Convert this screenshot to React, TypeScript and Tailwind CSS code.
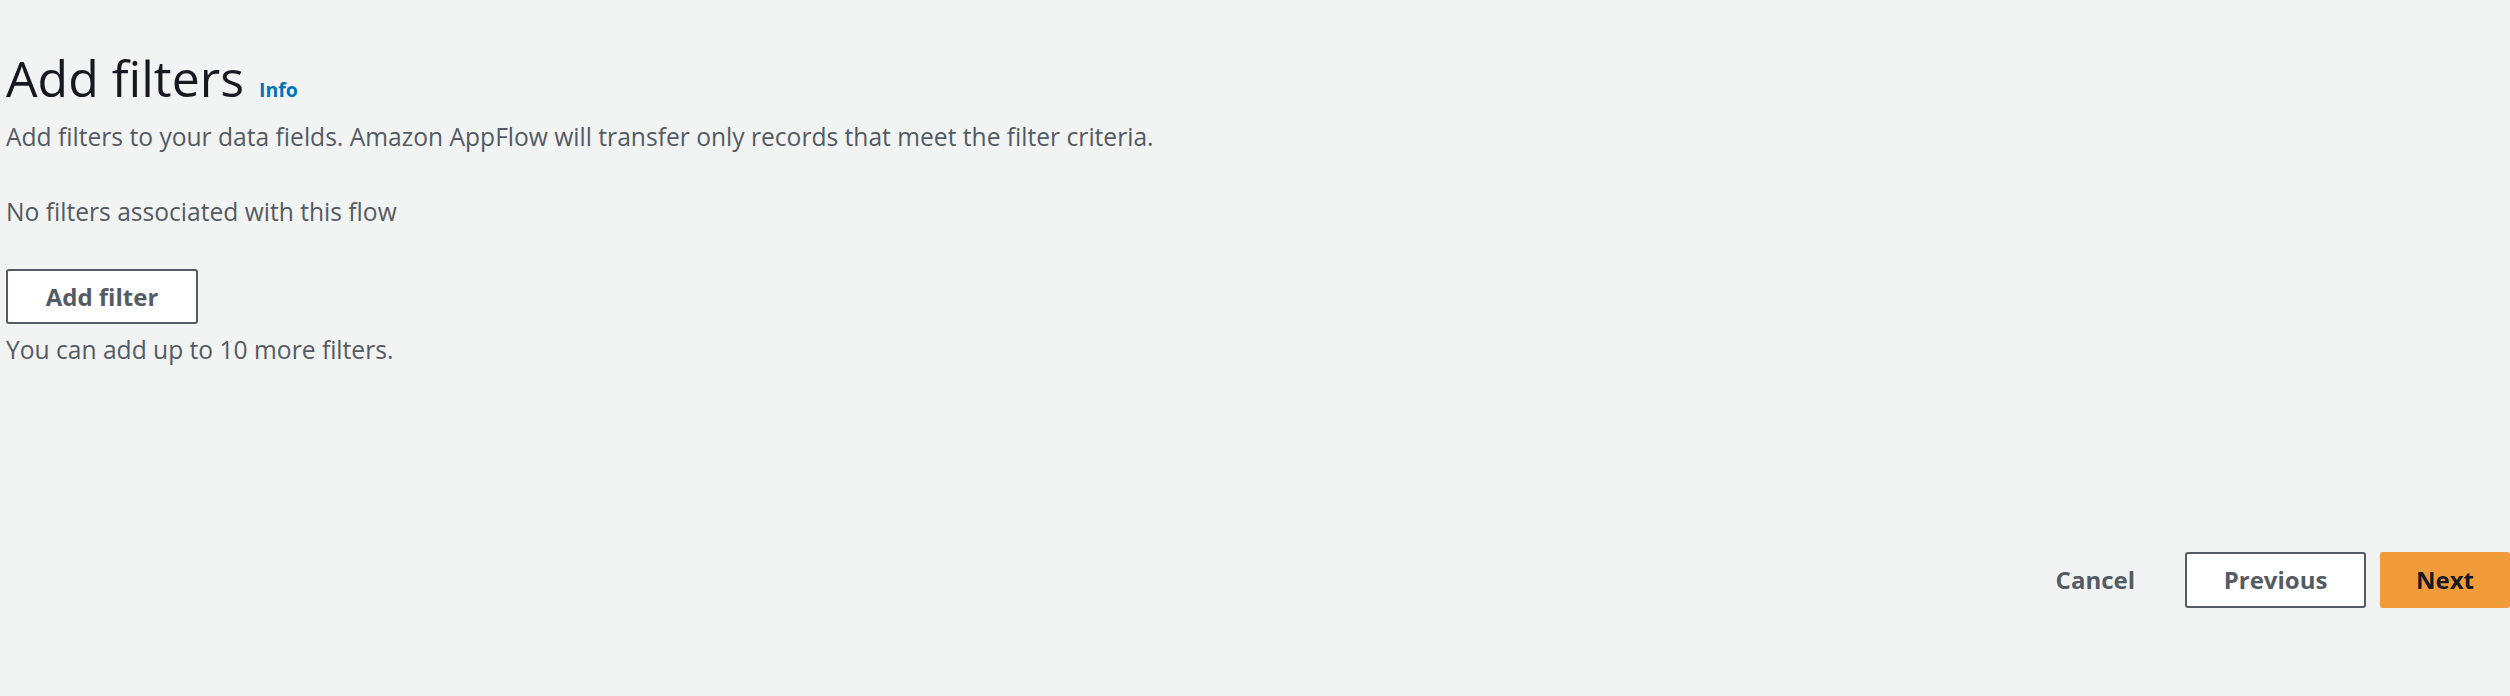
import React from 'react';

const font = { fontFamily: '"Open Sans", "Noto Sans", sans-serif' };

export default function App() {
  return (
    <div className="w-[2510px] h-[696px] bg-[#f2f3f3] text-[#545b64] flex flex-col" style={font}>
      {/* Header */}
      <div className="pl-[6px] pt-[48px]">
        <div className="flex items-baseline gap-[15px]">
          <h1 className="text-[50px] leading-[60px] font-normal text-[#16191f]">Add filters</h1>
          <a className="text-[19.5px] font-bold text-[#0073bb] cursor-pointer">Info</a>
        </div>
        <p className="text-[24.6px] leading-[36px] mt-[11px]">
          Add filters to your data fields. Amazon AppFlow will transfer only records that meet the filter criteria.
        </p>
      </div>

      {/* Filters */}
      <div className="pl-[6px] mt-[39px] flex flex-col items-start">
        <p className="text-[24.6px] leading-[36px]">No filters associated with this flow</p>
        <button className="mt-[39px] h-[55px] w-[192px] border-2 border-[#545b64] rounded-[3px] bg-white text-[24px] font-bold text-[#545b64]">
          Add filter
        </button>
        <p className="text-[24.6px] leading-[36px] mt-[8px]">You can add up to 10 more filters.</p>
      </div>

      {/* Footer */}
      <div className="mt-auto mb-[88px] flex justify-end items-center">
        <button className="h-[56px] px-[34px] text-[24px] font-bold text-[#545b64]">Cancel</button>
        <button className="ml-[16px] h-[56px] w-[181px] border-2 border-[#545b64] rounded-[3px] bg-white text-[24px] font-bold text-[#545b64]">
          Previous
        </button>
        <button className="ml-[14px] h-[56px] w-[130px] rounded-[3px] bg-[#f29b3a] text-[24px] font-bold text-[#16191f]">
          Next
        </button>
      </div>
    </div>
  );
}
